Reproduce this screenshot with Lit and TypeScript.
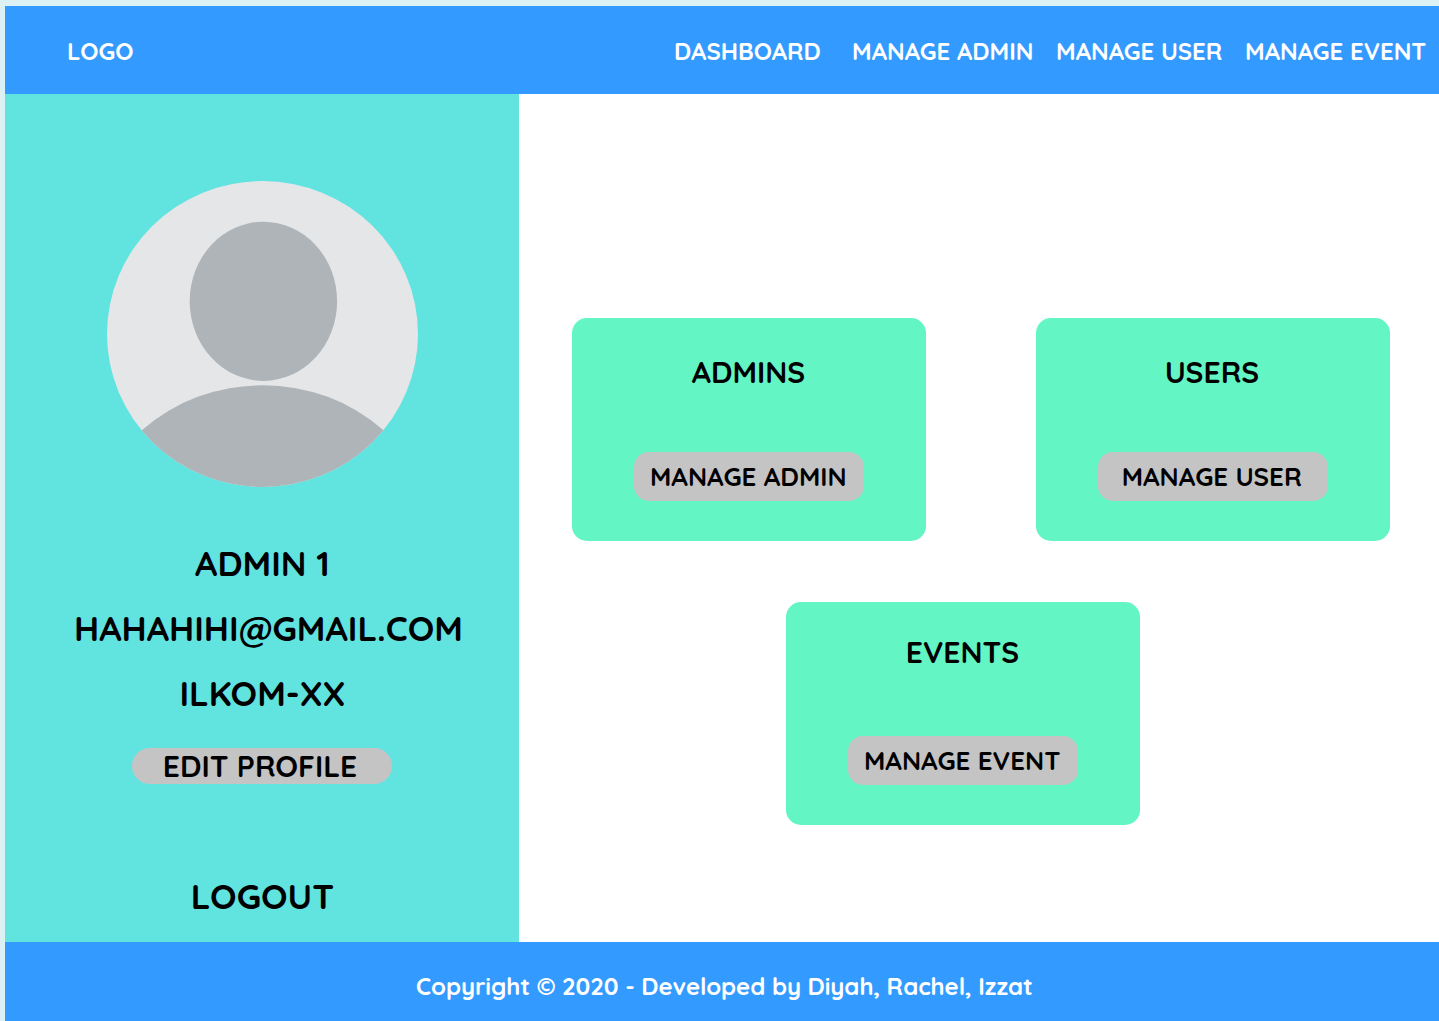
import { LitElement, html, css } from "lit";
import { customElement, property } from "lit/decorators.js";

@customElement("stat-card")
class StatCard extends LitElement {
  static styles = css`
    :host {
      display: block;
      box-sizing: border-box;
      width: 354px;
      height: 223px;
      border-radius: 15px;
      background: #63f6c4;
      color: #000;
    }
    .card {
      display: flex;
      flex-direction: column;
      align-items: center;
      justify-content: space-between;
      height: 100%;
      box-sizing: border-box;
      padding: var(--title-top, 35px) 0 40px;
    }
    .title {
      margin: 0;
      padding-right: var(--title-shift, 1px);
      font-size: 30px;
      font-weight: 700;
      line-height: 38px;
    }
    .action {
      box-sizing: border-box;
      width: 229.5px;
      height: 49px;
      padding: 0 var(--action-shift, 1.5px) 0 0;
      border: 0;
      border-radius: 15px;
      background: #c4c4c4;
      color: #000;
      font: 700 26px/49px Quicksand, Lato, sans-serif;
      text-align: center;
      white-space: nowrap;
    }
  `;

  @property() heading = "";
  @property() action = "";

  render() {
    return html`
      <section class="card">
        <h2 class="title">${this.heading}</h2>
        <button class="action">${this.action}</button>
      </section>
    `;
  }
}

@customElement("app-root")
class AppRoot extends LitElement {
  static styles = css`
    :host {
      display: block;
      box-sizing: border-box;
      height: 1021px;
      padding: 6px 0 0 5px;
      overflow: hidden;
      background: #dcf1f4;
      color: #000;
      font-family: Quicksand, Lato, sans-serif;
      font-weight: 700;
    }
    .page {
      display: grid;
      grid-template: 88px 848px 79px / 514px 1fr;
    }
    .header {
      grid-column: 1 / -1;
      display: flex;
      align-items: flex-start;
      justify-content: space-between;
      padding: 30px 0 0 62px;
      background: #339bff;
      color: #fff;
      font-size: 24px;
      line-height: 30px;
      white-space: nowrap;
    }
    .nav {
      display: grid;
      grid-template-columns: 178px 204px 189px 194px;
    }
    .sidebar {
      display: flex;
      flex-direction: column;
      align-items: center;
      padding-top: 87px;
      background: #61e3e0;
      white-space: nowrap;
    }
    .avatar {
      display: block;
      width: 311px;
      height: 306px;
      margin-bottom: 44px;
    }
    .line {
      padding-left: 1px;
      font-size: 35px;
      line-height: 65px;
    }
    .email {
      padding-left: 13px;
    }
    .edit {
      box-sizing: border-box;
      width: 260px;
      height: 36px;
      margin: 22px 0 90px;
      padding: 0 4px 0 0;
      border: 0;
      border-radius: 18px;
      background: #c4c4c4;
      color: #000;
      font: 700 30px/36px Quicksand, Lato, sans-serif;
    }
    .logout {
      padding-left: 1px;
      font-size: 35px;
      line-height: 44px;
    }
    .main {
      display: flex;
      flex-direction: column;
      gap: 61px;
      padding: 224px 0 0 53px;
      background: #fff;
    }
    .row {
      display: flex;
      gap: 110px;
    }
    .row-offset {
      padding-left: 214px;
    }
    .users {
      --title-shift: 2px;
      --action-shift: 2.5px;
    }
    .events {
      --title-top: 31px;
    }
    .footer {
      grid-column: 1 / -1;
      padding: 29px 0 0 411px;
      background: #339bff;
      color: #fff;
      font-size: 24px;
      letter-spacing: -0.055px;
      line-height: 30px;
      white-space: nowrap;
    }
  `;

  private nav = ["DASHBOARD", "MANAGE ADMIN", "MANAGE USER", "MANAGE EVENT"];

  render() {
    return html`
      <div class="page">
        <header class="header">
          <div>LOGO</div>
          <nav class="nav">${this.nav.map((item) => html`<span>${item}</span>`)}</nav>
        </header>
        <aside class="sidebar">
          <svg class="avatar" viewBox="0 0 311 306" aria-hidden="true">
            <defs>
              <clipPath id="disc"><ellipse cx="155.5" cy="153" rx="155.5" ry="153" /></clipPath>
            </defs>
            <ellipse cx="155.5" cy="153" rx="155.5" ry="153" fill="#e4e6e8" />
            <ellipse cx="156.4" cy="120.3" rx="73.7" ry="79.6" fill="#aeb4b8" />
            <ellipse cx="155.7" cy="356.3" rx="170" ry="152" fill="#aeb4b8" clip-path="url(#disc)" />
          </svg>
          <div class="line">ADMIN 1</div>
          <div class="line email">HAHAHIHI@GMAIL.COM</div>
          <div class="line">ILKOM-XX</div>
          <button class="edit">EDIT PROFILE</button>
          <div class="logout">LOGOUT</div>
        </aside>
        <main class="main">
          <div class="row">
            <stat-card heading="ADMINS" action="MANAGE ADMIN"></stat-card>
            <stat-card class="users" heading="USERS" action="MANAGE USER"></stat-card>
          </div>
          <div class="row row-offset">
            <stat-card class="events" heading="EVENTS" action="MANAGE EVENT"></stat-card>
          </div>
        </main>
        <footer class="footer">Copyright © 2020 - Developed by Diyah, Rachel, Izzat</footer>
      </div>
    `;
  }
}
